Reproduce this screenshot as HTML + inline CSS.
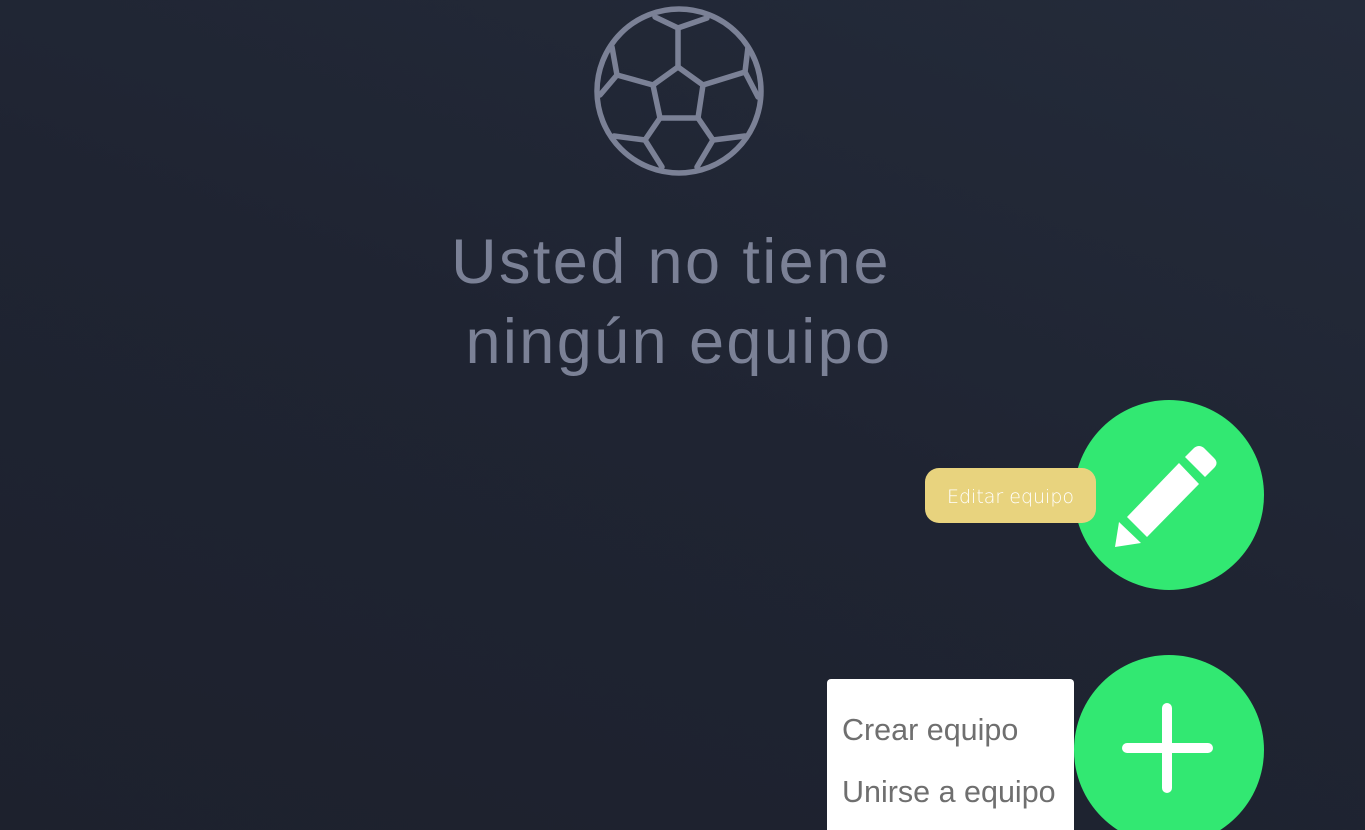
<!DOCTYPE html>
<html><head><meta charset="utf-8"><style>
html,body{margin:0;padding:0;width:1365px;height:830px;overflow:hidden}
body{background:linear-gradient(200deg,#242b3a 0%,#1f2432 50%,#1d212d 100%);font-family:"Liberation Sans",sans-serif;position:relative}
.t{position:absolute;left:380px;width:590px;text-align:center;color:#7b8196;font-size:63px;font-weight:300;letter-spacing:2.4px}
.fab{position:absolute;width:190px;height:190px;border-radius:50%;background:#32e872}
.tip{position:absolute;left:925px;top:468px;width:171px;height:55px;border-radius:14px;background:#e8d37e;color:#fff;font-size:19px;line-height:58px;text-align:center;font-family:"DejaVu Sans","Liberation Sans",sans-serif;font-weight:300}
.menu{position:absolute;left:827px;top:679px;width:247px;height:160px;background:#fff;border-radius:4px}
.menu div{position:absolute;left:15px;color:#6f6f6f;font-size:30.5px}
</style></head><body>
<svg width="1365" height="200" style="position:absolute;left:0;top:0" fill="none" stroke="#7b8196" stroke-width="5.5" stroke-linejoin="round" stroke-linecap="round">
<circle cx="679" cy="91" r="82"/>
<polygon points="678,67 703,85 698,118 660,118 653,85"/>
<path d="M678,67V28L655,17M678,28L707,18"/>
<path d="M653,85L617,75L612,47M617,75L600,95"/>
<path d="M703,85L745,72L748,47M745,72L758,97"/>
<path d="M660,118L645,140L614,136M645,140L662,167"/>
<path d="M698,118L713,140L745,136M713,140L697,167"/>
</svg>
<div class="t" style="top:226px;left:376px">Usted no tiene</div>
<div class="t" style="top:306px;left:384px">ningún equipo</div>
<div class="fab" style="left:1074px;top:400px"></div>
<svg width="1365" height="830" style="position:absolute;left:0;top:0" fill="#fff">
<polygon points="1127,517 1147,537 1199,484 1179,463"/>
<path d="M1185,457L1205,477L1214,468Q1219,463 1214,458L1204,448Q1199,444 1194,448Z"/>
<polygon points="1119,522 1115,547 1141,543"/>
</svg>
<div class="tip">Editar equipo</div>
<div class="fab" style="left:1074px;top:655px"></div>
<div style="position:absolute;left:1162px;top:703px;width:10px;height:90px;border-radius:5px;background:#fff"></div>
<div style="position:absolute;left:1122px;top:743px;width:91px;height:10px;border-radius:5px;background:#fff"></div>
<div class="menu"><div style="top:34px">Crear equipo</div><div style="top:96px">Unirse a equipo</div></div>
</body></html>
